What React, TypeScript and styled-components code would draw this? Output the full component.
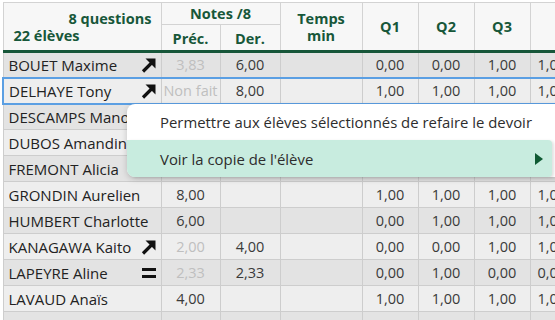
import React from 'react';
import styled, { createGlobalStyle } from 'styled-components';

const GlobalStyle = createGlobalStyle`
  html, body {
    margin: 0;
    padding: 0;
    background: #ffffff;
    overflow: hidden;
  }
  body {
    font-family: "Open Sans", "Liberation Sans", sans-serif;
  }
`;

const green = '#17573a';

const Page = styled.div`
  position: relative;
  width: max-content;
  height: 320px;
  padding: 2px 0 0 2px;
  box-sizing: border-box;
`;

const Table = styled.table`
  border-collapse: collapse;
  table-layout: fixed;
  width: 627px;
  min-width: 627px;
  font-size: 14.5px;
`;

const HeadCell = styled.th<{ $h?: number }>`
  background: #f7f7f7;
  border: 1px solid #d3d3d3;
  border-bottom: ${(p) => (p.$h ? '1px solid #d3d3d3' : `3px solid ${green}`)};
  color: ${green};
  font-weight: 700;
  font-size: 14.5px;
  line-height: 17px;
  padding: 0;
  height: ${(p) => p.$h ?? 24}px;
  text-align: center;
  vertical-align: middle;
`;

const SubHeadCell = styled(HeadCell)`
  border-bottom: 3px solid ${green};
  padding-top: 1px;
`;

const CornerHead = styled.div`
  display: flex;
  flex-direction: column;
  padding: 0 9px 0 10px;
  line-height: 17px;
`;

const Questions = styled.span`
  text-align: right;
`;

const Students = styled.span`
  text-align: left;
`;

const Row = styled.tr<{ $dark: boolean; $selected?: boolean }>`
  height: 26px;
  background: ${(p) => (p.$dark ? '#e3e3e3' : '#eeeeee')};

  & > td {
    border-top: ${(p) => (p.$selected ? '2px solid #5b9fe3' : '1px solid #cdcdcd')};
    border-bottom: ${(p) => (p.$selected ? '2px solid #5b9fe3' : '1px solid #cdcdcd')};
  }
  & > td:first-child {
    border-left: ${(p) => (p.$selected ? '2px solid #5b9fe3' : '1px solid #cdcdcd')};
  }
`;

const Cell = styled.td<{ $muted?: boolean; $left?: boolean }>`
  border-left: 1px solid #cdcdcd;
  border-right: 1px solid #cdcdcd;
  padding: ${(p) => (p.$left ? '0 0 0 7px' : '0')};
  text-align: ${(p) => (p.$left ? 'left' : 'center')};
  color: ${(p) => (p.$muted ? '#bfbfbf' : '#3a3a3a')};
  white-space: nowrap;
  overflow: hidden;
`;

const NameCell = styled.td`
  padding: 0 4px 0 5px;
  border-right: 1px solid #cdcdcd;
  font-size: 15px;
`;

const NameBox = styled.div`
  display: flex;
  align-items: center;
  justify-content: space-between;
  color: #222;
  white-space: nowrap;
  overflow: hidden;
`;

const TrendIcon = styled.svg`
  flex: none;
  width: 16px;
  height: 16px;
`;

const Menu = styled.div`
  position: absolute;
  left: 127px;
  top: 104px;
  width: 450px;
  background: #ffffff;
  border-radius: 8px 0 0 8px;
  box-shadow: 0 2px 6px rgba(0, 0, 0, 0.18);
  display: flex;
  flex-direction: column;
  font-size: 14.9px;
  color: #2d2d2d;
`;

const MenuItem = styled.div<{ $active?: boolean }>`
  display: flex;
  align-items: center;
  justify-content: space-between;
  height: ${(p) => (p.$active ? 37 : 36)}px;
  width: ${(p) => (p.$active ? '425px' : 'auto')};
  box-sizing: border-box;
  padding: 0 8px 0 33px;
  background: ${(p) => (p.$active ? '#c8ecdf' : 'transparent')};
  border-radius: ${(p) => (p.$active ? '0 4px 4px 8px' : '8px 0 0 0')};
  box-shadow: ${(p) => (p.$active ? '2px 1px 3px rgba(0,0,0,0.12)' : 'none')};
`;

type Trend = 'up' | 'equal' | undefined;

type Student = {
  name: string;
  trend?: Trend;
  prec: string;
  precMuted?: boolean;
  der: string;
  q: string[];
};

const students: Student[] = [
  { name: 'BOUET Maxime', trend: 'up', prec: '3,83', precMuted: true, der: '6,00', q: ['0,00', '0,00', '1,00', '1,00'] },
  { name: 'DELHAYE Tony', trend: 'up', prec: 'Non fait', precMuted: true, der: '8,00', q: ['1,00', '1,00', '1,00', '1,00'] },
  { name: 'DESCAMPS Manon', prec: '7,00', der: '', q: ['1,00', '1,00', '1,00', '1,00'] },
  { name: 'DUBOS Amandine', prec: '5,00', der: '', q: ['1,00', '0,00', '1,00', '1,00'] },
  { name: 'FREMONT Alicia', prec: '5,00', der: '', q: ['1,00', '1,00', '0,00', '1,00'] },
  { name: 'GRONDIN Aurelien', prec: '8,00', der: '', q: ['1,00', '1,00', '1,00', '1,00'] },
  { name: 'HUMBERT Charlotte', prec: '6,00', der: '', q: ['0,00', '1,00', '1,00', '1,00'] },
  { name: 'KANAGAWA Kaito', trend: 'up', prec: '2,00', precMuted: true, der: '4,00', q: ['0,00', '0,00', '1,00', '1,00'] },
  { name: 'LAPEYRE Aline', trend: 'equal', prec: '2,33', precMuted: true, der: '2,33', q: ['0,00', '1,00', '0,00', '0,00'] },
  { name: 'LAVAUD Anaïs', prec: '4,00', der: '', q: ['1,00', '1,00', '1,00', '1,00'] },
  { name: '', prec: '', der: '', q: ['', '', '', ''] },
];

const TrendMark: React.FC<{ trend: Trend }> = ({ trend }) => {
  if (trend === 'up') {
    return (
      <TrendIcon viewBox="0 0 16 16">
        <path d="M2 14.5 L11 5.5" stroke="#111" strokeWidth="3.2" strokeLinecap="butt" />
        <path d="M4.5 1.5 H14.5 V11.5 Z" fill="#111" />
      </TrendIcon>
    );
  }
  if (trend === 'equal') {
    return (
      <TrendIcon viewBox="0 0 16 16">
        <rect x="1" y="3" width="14" height="3" fill="#111" />
        <rect x="1" y="10" width="14" height="3" fill="#111" />
      </TrendIcon>
    );
  }
  return null;
};

export default function App() {
  return (
    <Page>
      <GlobalStyle />
      <Table>
        <colgroup>
          <col style={{ width: 158 }} />
          <col style={{ width: 59 }} />
          <col style={{ width: 60 }} />
          <col style={{ width: 82 }} />
          <col style={{ width: 56 }} />
          <col style={{ width: 56 }} />
          <col style={{ width: 56 }} />
          <col style={{ width: 100 }} />
        </colgroup>
        <thead>
          <tr>
            <HeadCell rowSpan={2}>
              <CornerHead>
                <Questions>8 questions</Questions>
                <Students>22 élèves</Students>
              </CornerHead>
            </HeadCell>
            <HeadCell colSpan={2} $h={21}>
              Notes /8
            </HeadCell>
            <HeadCell rowSpan={2}>
              Temps
              <br />
              min
            </HeadCell>
            <HeadCell rowSpan={2}>Q1</HeadCell>
            <HeadCell rowSpan={2}>Q2</HeadCell>
            <HeadCell rowSpan={2}>Q3</HeadCell>
            <HeadCell rowSpan={2}>Q4</HeadCell>
          </tr>
          <tr>
            <SubHeadCell>Préc.</SubHeadCell>
            <SubHeadCell>Der.</SubHeadCell>
          </tr>
        </thead>
        <tbody>
          {students.map((s, i) => (
            <Row key={i} $dark={i % 2 === 0} $selected={i === 1}>
              <NameCell>
                <NameBox>
                  <span>{s.name}</span>
                  <TrendMark trend={s.trend} />
                </NameBox>
              </NameCell>
              <Cell $muted={s.precMuted}>{s.prec}</Cell>
              <Cell>{s.der}</Cell>
              <Cell />
              <Cell>{s.q[0]}</Cell>
              <Cell>{s.q[1]}</Cell>
              <Cell>{s.q[2]}</Cell>
              <Cell $left>{s.q[3]}</Cell>
            </Row>
          ))}
        </tbody>
      </Table>
      <Menu>
        <MenuItem>Permettre aux élèves sélectionnés de refaire le devoir</MenuItem>
        <MenuItem $active>
          Voir la copie de l'élève
          <svg width="10" height="12" viewBox="0 0 10 12">
            <path d="M1 0 L9 6 L1 12 Z" fill="#0f5a33" />
          </svg>
        </MenuItem>
      </Menu>
    </Page>
  );
}
